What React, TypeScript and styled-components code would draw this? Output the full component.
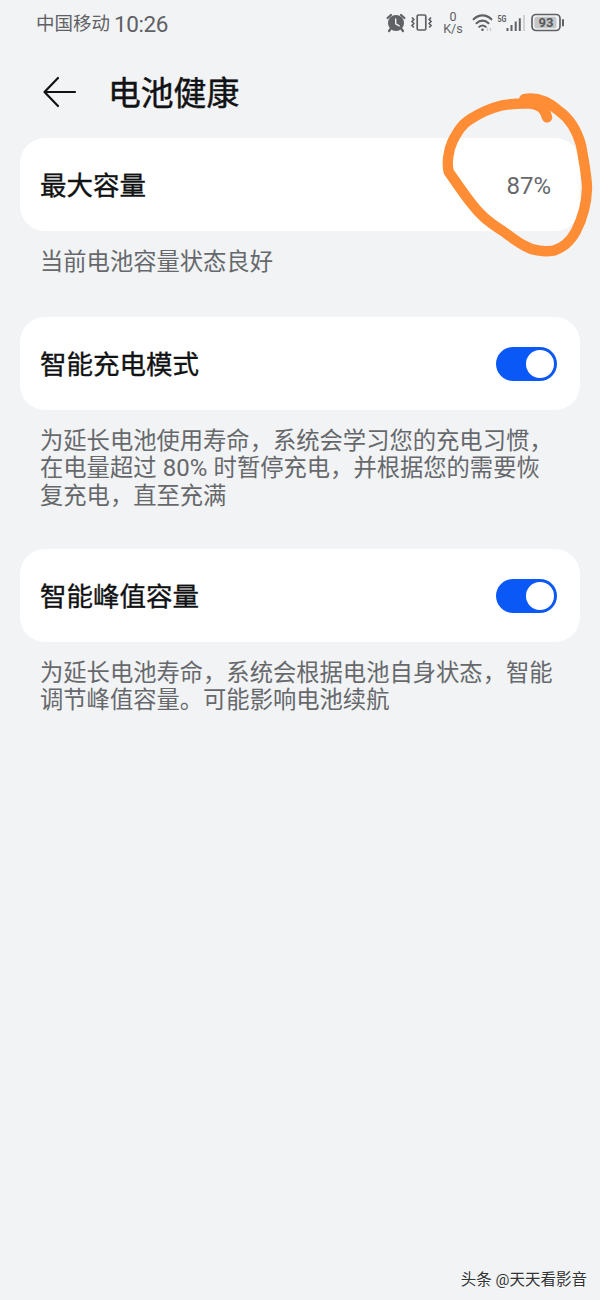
import React from "react";
import styled, { createGlobalStyle } from "styled-components";

const Global = createGlobalStyle`
  * { box-sizing: border-box; }
  body {
    margin: 0;
    background: #f1f3f5;
    font-family: Roboto, "Noto Sans CJK SC", sans-serif;
  }
`;

const Screen = styled.div`
  position: relative;
  display: flex;
  flex-direction: column;
  width: 600px;
  height: 1300px;
  overflow: hidden;
  background: #f1f3f5;
`;

const StatusBar = styled.div`
  display: flex;
  align-items: center;
  justify-content: space-between;
  height: 46px;
  padding: 0 35px 0 36px;
  color: #5f6164;
`;

const Carrier = styled.div`
  display: flex;
  align-items: center;
  gap: 4px;
  padding-top: 2px;
  font-size: 18.5px;
  line-height: 24px;
  white-space: nowrap;
`;

const Clock = styled.span`
  font-size: 22.5px;
  letter-spacing: -0.4px;
`;

const StatusIcons = styled.div`
  display: flex;
  align-items: center;
`;

const Speed = styled.div`
  display: flex;
  flex-direction: column;
  align-items: center;
  width: 22px;
  margin: 0 8px 0 9px;
  font-size: 12.5px;
  line-height: 12px;
`;

const SpeedLine = styled.span`
  display: block;
  height: 12px;
`;

const Header = styled.header`
  display: flex;
  align-items: center;
  gap: 31px;
  height: 92px;
  padding-left: 42px;
`;

const Title = styled.h1`
  margin: 0;
  padding-top: 3px;
  color: #111214;
  font-size: 32.8px;
  font-weight: 400;
  line-height: 44px;
  -webkit-text-stroke: 0.45px #111214;
`;

const Card = styled.section`
  display: flex;
  align-items: center;
  justify-content: space-between;
  height: 93px;
  margin: 0 20px;
  padding: 0 23px 0 20px;
  border-radius: 25px;
  background: #fff;
`;

const Label = styled.div`
  padding-top: 2px;
  color: #111214;
  font-size: 26.5px;
  font-weight: 400;
  line-height: 36px;
  -webkit-text-stroke: 0.35px #111214;
`;

const Value = styled.div`
  margin-right: 6px;
  padding-top: 2px;
  color: #66686b;
  font-size: 24px;
`;

const Note = styled.p<{ $height: number }>`
  height: ${(p) => p.$height}px;
  margin: 0;
  padding: 18px 0 0 40px;
  color: #66686b;
  font-size: 23.3px;
  line-height: 27.3px;
  white-space: nowrap;
`;

const Line = styled.span`
  display: block;
`;

const Percent = styled.span`
  font-size: 24px;
  margin: 0 0.5px;
`;

const Switch = styled.button`
  display: flex;
  align-items: center;
  justify-content: flex-end;
  width: 61px;
  height: 34px;
  padding: 0 3px;
  border: 0;
  border-radius: 17px;
  background: #0a59f7;
`;

const Knob = styled.span`
  width: 28px;
  height: 28px;
  border-radius: 50%;
  background: #fff;
`;

const Scribble = styled.svg`
  position: absolute;
  left: 430px;
  top: 85px;
`;

const Watermark = styled.div`
  margin: auto 13px 8px auto;
  color: #303234;
  font-size: 15.5px;
  line-height: 24px;
  text-shadow: 0 1px 1px #fff;
`;

const BackIcon = () => (
  <svg width="35" height="34" viewBox="0 0 35 34" fill="none" stroke="#111214" strokeWidth="2.2" strokeLinecap="round" strokeLinejoin="round">
    <path d="M33 17H2.5M16 3L2.5 17L16 31" />
  </svg>
);

const AlarmIcon = () => (
  <svg width="20" height="20" viewBox="0 0 20 20" fill="none">
    <circle cx="10" cy="10" r="8" fill="#5f6164" />
    <path d="M1.6 5L5 2M18.4 5L15 2M4.5 16L3 18M15.5 16L17 18" stroke="#5f6164" strokeWidth="2.2" strokeLinecap="round" />
    <path d="M9.7 6V10.8L13.2 12.8" stroke="#f1f3f5" strokeWidth="1.4" strokeLinecap="round" />
  </svg>
);

const VibrateIcon = () => (
  <svg style={{ marginLeft: 4 }} width="23" height="20" viewBox="0 0 23 20" fill="none" stroke="#5f6164" strokeWidth="1.7">
    <rect x="7.2" y="2" width="8.6" height="15" rx="1.2" />
    <path d="M2 4.5L3.8 6.5L2 8.5L3.8 10.5L2 12.5L3.8 14.5M21 4.5L19.2 6.5L21 8.5L19.2 10.5L21 12.5L19.2 14.5" />
  </svg>
);

const WifiIcon = () => (
  <svg width="22" height="20" viewBox="0 0 22 20" fill="none" stroke="#5f6164" strokeWidth="2.1" strokeLinecap="round">
    <path d="M1.6 6.3C7 1.1 14 1.1 19.4 6.3M4.5 10.2C8 6.8 13 6.8 16.5 10.2M7.3 13.8C9.5 12 11.5 12 13.7 13.8" />
    <circle cx="10.5" cy="16.8" r="1.3" fill="#5f6164" stroke="none" />
    <path d="M15.5 15.5V17.5M18.5 15.5V17.5" stroke="#c9cccf" strokeWidth="1.4" />
  </svg>
);

const SignalIcon = () => (
  <svg style={{ marginLeft: 3 }} width="29" height="20" viewBox="0 0 29 20">
    <text x="0.5" y="8.7" fontFamily="Roboto" fontSize="9" fontWeight="700" textLength="9" lengthAdjust="spacingAndGlyphs" fill="#5f6164">5G</text>
    <path d="M10.5 15V18M14.5 12V18M18.7 8.5V18M22.8 5.2V18" stroke="#5f6164" strokeWidth="2" />
    <path d="M27 2V18" stroke="#cfd1d4" strokeWidth="2" />
  </svg>
);

const BatteryIcon = () => (
  <svg style={{ marginLeft: 5 }} width="34" height="20" viewBox="0 0 34 20" fill="none">
    <rect x="1" y="1.5" width="28" height="16" rx="4" stroke="#5f6164" strokeWidth="1.7" />
    <rect x="3.4" y="3.8" width="22" height="11.4" rx="2" fill="#c4c6c8" />
    <path d="M32 7V12.5" stroke="#5f6164" strokeWidth="2" strokeLinecap="round" />
    <text x="15" y="14.2" textAnchor="middle" fontFamily="Roboto" fontSize="13" fontWeight="700" fill="#55575a">93</text>
  </svg>
);

const Toggle = () => (
  <Switch type="button" role="switch" aria-checked="true">
    <Knob />
  </Switch>
);

export default function App() {
  return (
    <Screen>
      <Global />
      <StatusBar>
        <Carrier>
          中国移动<Clock>10:26</Clock>
        </Carrier>
        <StatusIcons>
          <AlarmIcon />
          <VibrateIcon />
          <Speed>
            <SpeedLine>0</SpeedLine>
            <SpeedLine>K/s</SpeedLine>
          </Speed>
          <WifiIcon />
          <SignalIcon />
          <BatteryIcon />
        </StatusIcons>
      </StatusBar>
      <Header>
        <BackIcon />
        <Title>电池健康</Title>
      </Header>

      <Card>
        <Label>最大容量</Label>
        <Value>87%</Value>
      </Card>
      <Note $height={86}>当前电池容量状态良好</Note>

      <Card>
        <Label>智能充电模式</Label>
        <Toggle />
      </Card>
      <Note $height={139}>
        <Line>为延长电池使用寿命，系统会学习您的充电习惯，</Line>
        <Line>
          在电量超过 <Percent>80%</Percent> 时暂停充电，并根据您的需要恢
        </Line>
        <Line>复充电，直至充满</Line>
      </Note>

      <Card>
        <Label>智能峰值容量</Label>
        <Toggle />
      </Card>
      <Note $height={90}>
        <Line>为延长电池寿命，系统会根据电池自身状态，智能</Line>
        <Line>调节峰值容量。可能影响电池续航</Line>
      </Note>

      <Watermark>头条 @天天看影音</Watermark>

      <Scribble width="170" height="180" viewBox="0 0 510 540" fill="none" stroke="#ff8d35" strokeWidth="31" strokeLinecap="round" strokeLinejoin="round">
        <path d="M283 42C315 36 350 46 385 76C420 101 443 143 453 180C461 225 471 275 471 310C470 350 460 395 438 438C420 472 395 490 370 497C345 501 310 498 285 483C260 471 240 453 215 436C175 412 147 387 124 355C100 325 77 290 56 260C50 235 55 195 68 168C82 142 95 118 120 103C150 83 180 70 212 62C240 57 270 54 300 56C325 58 345 68 351 97" />
      </Scribble>
    </Screen>
  );
}
